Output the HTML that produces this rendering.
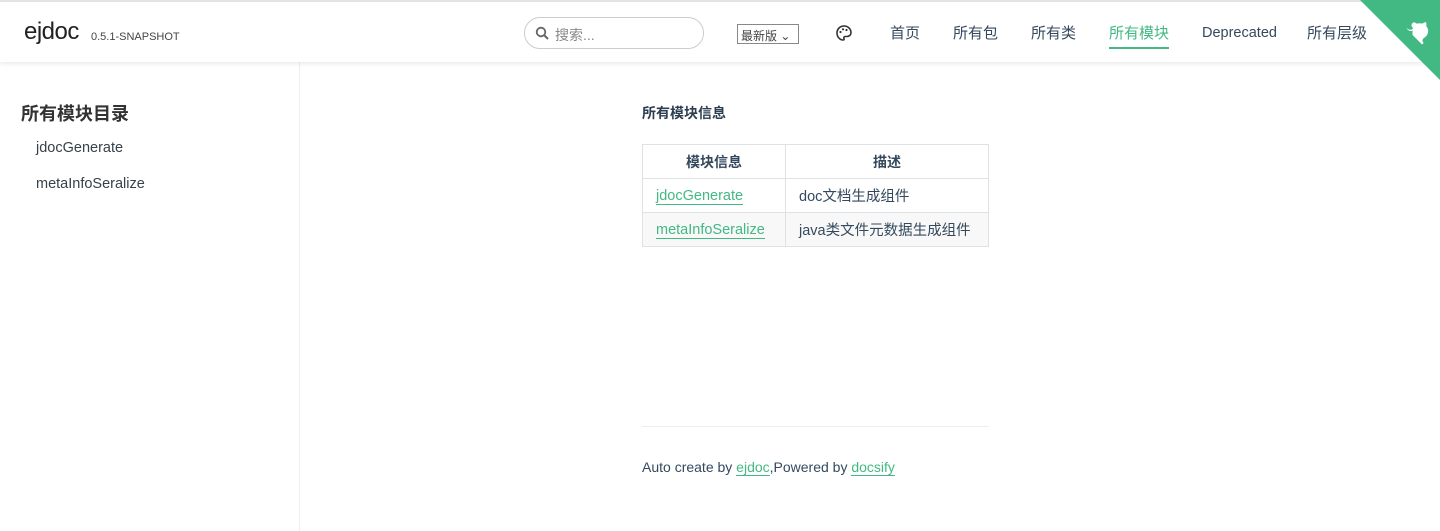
<!DOCTYPE html>
<html><head><meta charset="utf-8"><style>
*{margin:0;padding:0;box-sizing:border-box}
body{width:1440px;height:531px;overflow:hidden;background:#fff;font-family:"Liberation Sans","Noto Sans CJK SC",sans-serif;color:#34495e;position:relative}
.top{position:absolute;left:0;top:0;width:1440px;height:2px;background:#e4e4e4}
header{position:absolute;left:0;top:2px;width:1440px;height:60px;background:#fff;box-shadow:0 2px 4px rgba(0,0,0,.08);z-index:2}
.logo{position:absolute;left:24px;top:16px;font-size:24px;color:#222;letter-spacing:-0.5px}
.ver{position:absolute;left:91px;top:29px;font-size:11px;color:#444}
.search{position:absolute;left:524px;top:15px;width:180px;height:32px;border:1px solid #ccc;border-radius:16px;font-size:14px;color:#888;padding:7px 0 0 30px}
.search svg{position:absolute;left:10px;top:8px}
.sel{position:absolute;left:737px;top:22px;width:62px;height:20px;border:1px solid #888;font-size:12px;color:#444;padding:2px 3px}
.nav a{position:absolute;top:20px;font-size:15px;color:#34495e;text-decoration:none}
.nav a.act{color:#42b983;border-bottom:2px solid #42b983;padding-bottom:4px}
.corner{position:absolute;right:0;top:0;z-index:3}
aside{position:absolute;left:0;top:62px;width:300px;height:469px;border-right:1px solid #eee}
aside h2{position:absolute;left:21px;top:38px;font-size:18px;font-weight:bold;color:#333}
aside a{position:absolute;left:36px;font-size:14.5px;color:#364149;text-decoration:none}
.h{position:absolute;left:642px;top:103px;font-size:14px;font-weight:bold;color:#2c3e50}
table{position:absolute;left:642px;top:144px;border-collapse:collapse;font-size:14.5px}
td,th{border:1px solid #dfe2e5;height:34px;padding:0 13px}
th{font-weight:bold;font-size:14px;text-align:center}
tr.g td{background:#f8f8f8}
td a{color:#42b983;text-decoration:none;border-bottom:1px solid #42b983}
hr{position:absolute;left:642px;top:426px;width:347px;border:0;border-top:1px solid #eee}
.foot{position:absolute;left:642px;top:459px;font-size:14px;color:#34495e}
.foot a{color:#42b983;text-decoration:none;border-bottom:1px solid #42b983}
</style></head><body>
<div class="top"></div>
<header>
<div class="logo">ejdoc</div><div class="ver">0.5.1-SNAPSHOT</div>
<div class="search"><svg width="14" height="14" viewBox="0 0 14 14"><circle cx="6" cy="6" r="4.3" fill="none" stroke="#666" stroke-width="1.8"/><path d="M9 9l4 4" stroke="#666" stroke-width="2"/></svg>搜索...</div>
<div class="sel">最新版 ⌄</div>
<svg style="position:absolute;left:835px;top:22px" width="18" height="18" viewBox="0 0 18 18"><path d="M9 2C5 2 2 5 2 9s3 7 6 7c1 0 1.5-.7 1-1.5-.5-1 0-2 1.3-2H12c2.3 0 4-1.7 4-3.8C16 5 13 2 9 2z" fill="none" stroke="#333" stroke-width="1.6"/><circle cx="5.5" cy="8" r="1.1" fill="#333"/><circle cx="8" cy="5.3" r="1.1" fill="#333"/><circle cx="11.5" cy="6" r="1.1" fill="#333"/></svg>
<div class="nav">
<a style="left:890px">首页</a><a style="left:953px">所有包</a><a style="left:1031px">所有类</a><a class="act" style="left:1109px">所有模块</a><a style="left:1202px;font-size:14.5px;top:23px">Deprecated</a><a style="left:1307px">所有层级</a>
</div>
</header>
<svg class="corner" width="80" height="80" viewBox="0 0 250 250"><path d="M0 0L250 250V0Z" fill="#42b983"/><path d="M130 90c-5 0-9 4-9 9 0 4 2 7 5 8-1 3-3 5-7 6-6 1-10-3-14-7 3 6 7 11 14 11 2 0 4-1 5-2v14l30 30 5-5c-5-5-5-10 0-15 8-4 14-12 14-22 0-6-2-11-6-15 1-4 1-9-1-13-4 0-8 2-11 5-3-1-6-1-9-1-3 0-6 0-9 1-3-3-7-5-11-5z" fill="#fff" transform="translate(40,-20)"/></svg>
<aside><h2>所有模块目录</h2><a style="top:78px">jdocGenerate</a><a style="top:114px">metaInfoSeralize</a></aside>
<div class="h">所有模块信息</div>
<table>
<tr><th style="width:143px">模块信息</th><th style="width:203px">描述</th></tr>
<tr><td><a>jdocGenerate</a></td><td>doc文档生成组件</td></tr>
<tr class="g"><td><a>metaInfoSeralize</a></td><td>java类文件元数据生成组件</td></tr>
</table>
<hr>
<div class="foot">Auto create by <a>ejdoc</a>,Powered by <a>docsify</a></div>
</body></html>
